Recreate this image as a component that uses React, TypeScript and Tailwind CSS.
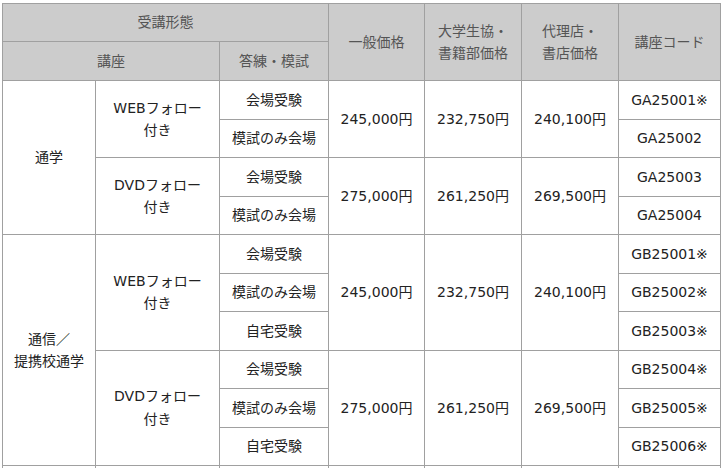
import React from "react";

const B = "border border-[#a0a0a0]";
const TD = `${B} text-center align-middle p-0`;
const TH = `${B} text-center align-middle p-0 font-normal bg-[#cccccc] text-[#555555]`;

type Row = { exam: string; code: string };

function Group({
  big,
  groups,
}: {
  big: React.ReactNode;
  groups: { course: string; prices: [string, string, string]; rows: Row[] }[];
}) {
  const total = groups.reduce((s, g) => s + g.rows.length, 0);
  const out: React.ReactNode[] = [];
  groups.forEach((g, gi) => {
    g.rows.forEach((r, ri) => {
      out.push(
        <tr key={`${gi}-${ri}`} className="h-[38.5px]">
          {gi === 0 && ri === 0 && (
            <td rowSpan={total} className={TD}>
              {big}
            </td>
          )}
          {ri === 0 && (
            <td rowSpan={g.rows.length} className={TD}>
              {g.course}
              <br />
              付き
            </td>
          )}
          <td className={TD}>{r.exam}</td>
          {ri === 0 && (
            <>
              <td rowSpan={g.rows.length} className={TD}>
                {g.prices[0]}
              </td>
              <td rowSpan={g.rows.length} className={TD}>
                {g.prices[1]}
              </td>
              <td rowSpan={g.rows.length} className={TD}>
                {g.prices[2]}
              </td>
            </>
          )}
          <td className={TD}>{r.code}</td>
        </tr>
      );
    });
  });
  return <>{out}</>;
}

export default function App() {
  return (
    <div
      className="bg-white w-[721px] h-[468px] overflow-hidden pt-[3px] pl-[2px] text-[14px] leading-[22.5px] text-[#222222]"
      style={{ fontFamily: '"DejaVu Sans", "Noto Sans CJK JP", sans-serif' }}
    >
      <table className="border-collapse table-fixed w-[718px]">
        <colgroup>
          <col className="w-[93px]" />
          <col className="w-[124px]" />
          <col className="w-[109px]" />
          <col className="w-[96px]" />
          <col className="w-[97px]" />
          <col className="w-[97px]" />
          <col className="w-[102px]" />
        </colgroup>
        <thead>
          <tr className="h-[38px]">
            <th colSpan={3} className={TH}>
              受講形態
            </th>
            <th rowSpan={2} className={TH}>
              一般価格
            </th>
            <th rowSpan={2} className={TH}>
              大学生協・
              <br />
              書籍部価格
            </th>
            <th rowSpan={2} className={TH}>
              代理店・
              <br />
              書店価格
            </th>
            <th rowSpan={2} className={TH}>
              講座コード
            </th>
          </tr>
          <tr className="h-[39px]">
            <th colSpan={2} className={TH}>
              講座
            </th>
            <th className={TH}>答練・模試</th>
          </tr>
        </thead>
        <tbody>
          <Group
            big="通学"
            groups={[
              {
                course: "WEBフォロー",
                prices: ["245,000円", "232,750円", "240,100円"],
                rows: [
                  { exam: "会場受験", code: "GA25001※" },
                  { exam: "模試のみ会場", code: "GA25002" },
                ],
              },
              {
                course: "DVDフォロー",
                prices: ["275,000円", "261,250円", "269,500円"],
                rows: [
                  { exam: "会場受験", code: "GA25003" },
                  { exam: "模試のみ会場", code: "GA25004" },
                ],
              },
            ]}
          />
          <Group
            big={
              <>
                通信／
                <br />
                提携校通学
              </>
            }
            groups={[
              {
                course: "WEBフォロー",
                prices: ["245,000円", "232,750円", "240,100円"],
                rows: [
                  { exam: "会場受験", code: "GB25001※" },
                  { exam: "模試のみ会場", code: "GB25002※" },
                  { exam: "自宅受験", code: "GB25003※" },
                ],
              },
              {
                course: "DVDフォロー",
                prices: ["275,000円", "261,250円", "269,500円"],
                rows: [
                  { exam: "会場受験", code: "GB25004※" },
                  { exam: "模試のみ会場", code: "GB25005※" },
                  { exam: "自宅受験", code: "GB25006※" },
                ],
              },
            ]}
          />
          <tr className="h-[38.5px]">
            <td className={TD}></td>
            <td className={TD}></td>
            <td className={TD}></td>
            <td className={TD}></td>
            <td className={TD}></td>
            <td className={TD}></td>
            <td className={TD}></td>
          </tr>
        </tbody>
      </table>
    </div>
  );
}
